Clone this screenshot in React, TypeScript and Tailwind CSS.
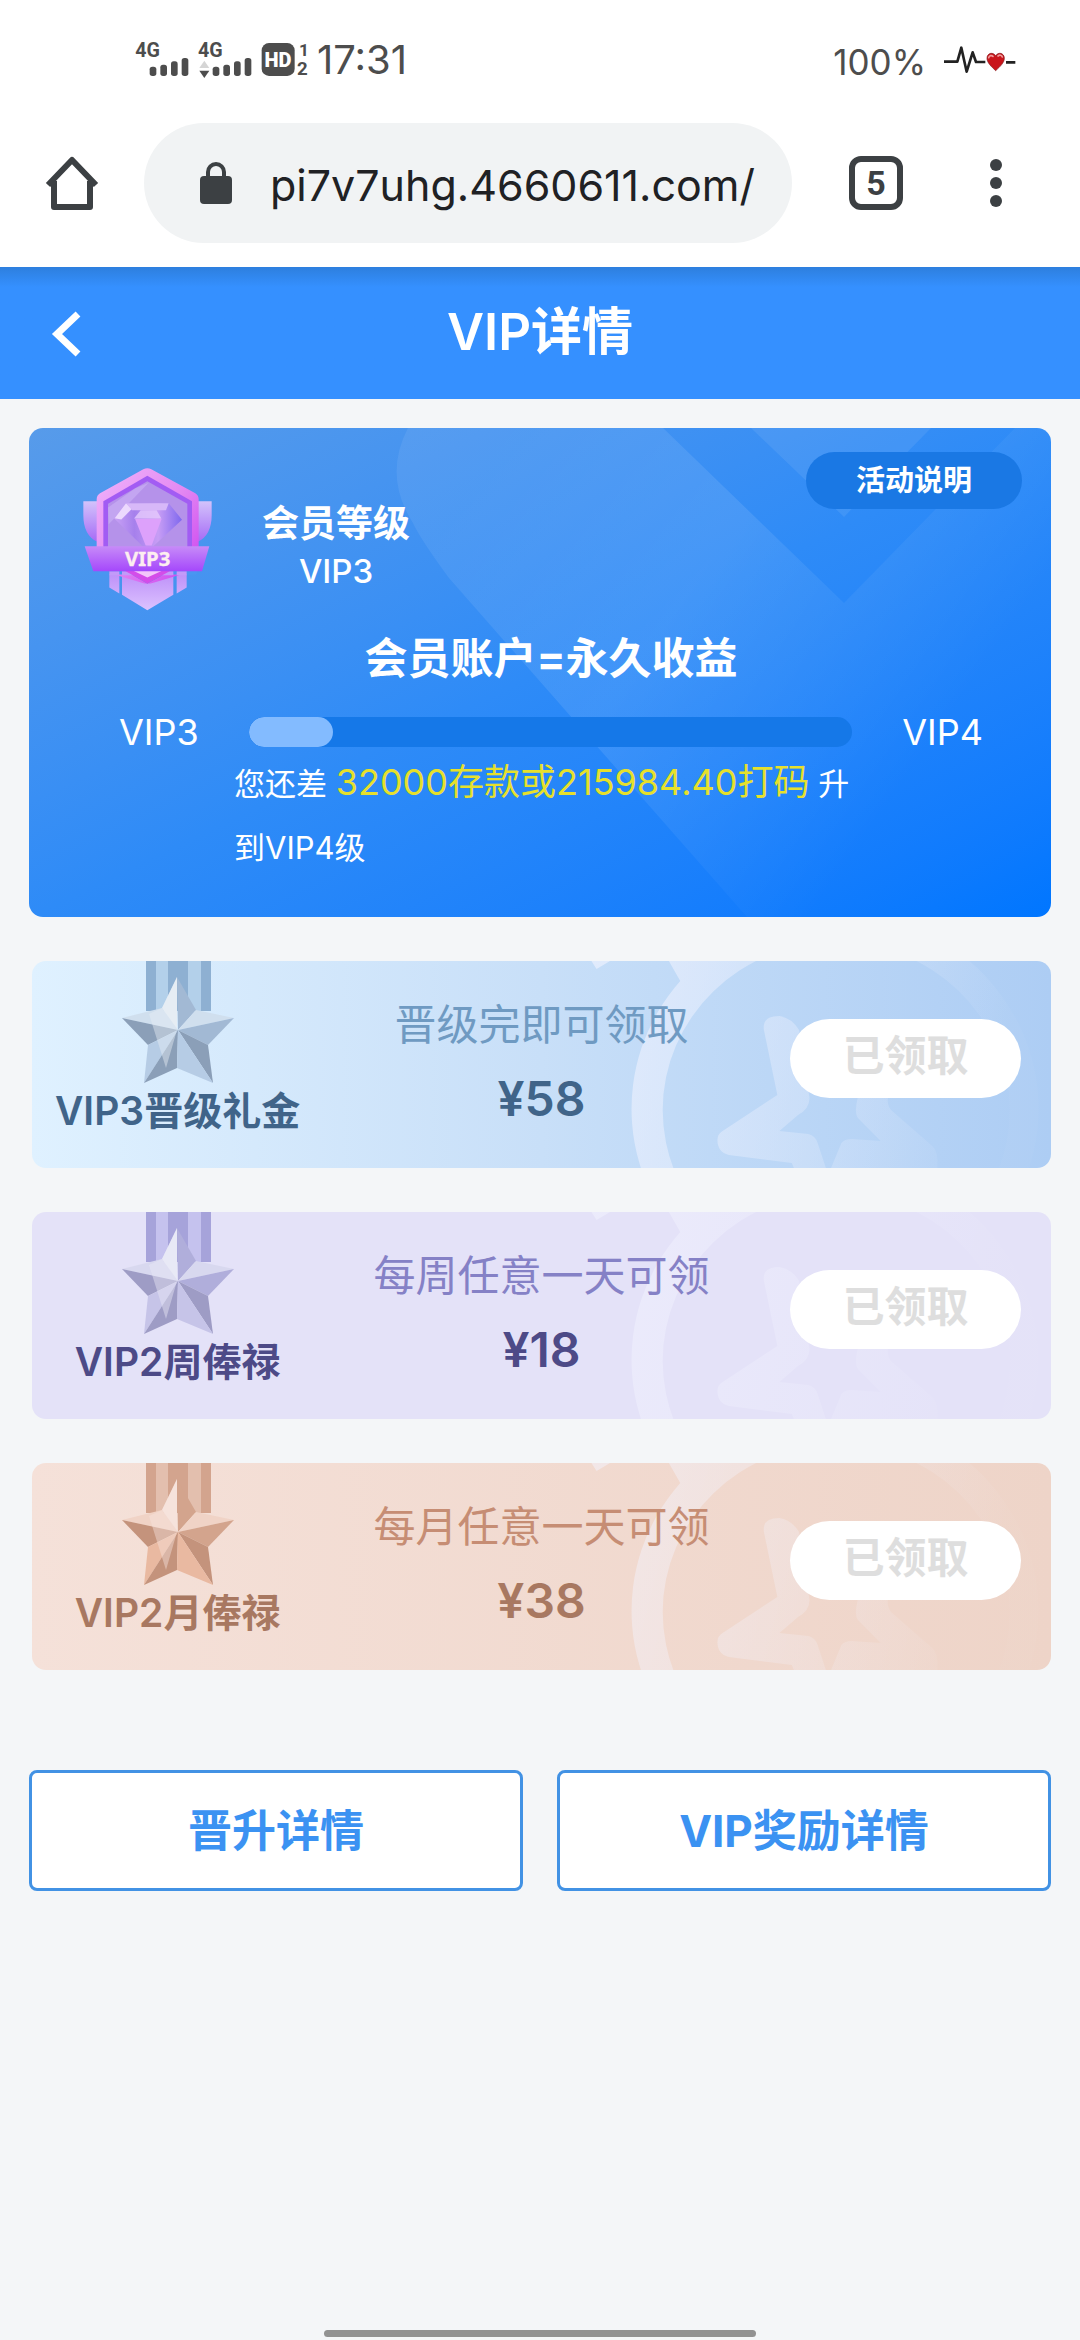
import React from "react";

const FONT = "font-['Inter','Noto_Sans_CJK_SC',sans-serif]";

function Bars() {
  return (
    <g fill="#4d4d4d">
      <rect x="0" y="26" width="20" height="28" rx="8" />
      <rect x="32" y="20" width="20" height="34" rx="8" />
      <rect x="64" y="10" width="20" height="44" rx="8" />
      <rect x="96" y="0" width="20" height="54" rx="8" />
    </g>
  );
}

function StatusBar() {
  return (
    <div className="flex h-[120px] items-start justify-between pt-[36px] pr-[64px] pl-[135px] text-[#4d4d4d]">
      <div className="flex h-[48px] items-center">
        <svg className="h-[40px] w-[174px]" viewBox="106 60 522 120" aria-label="4G 4G HD">
          <g fontFamily="Roboto" fontWeight="700" fill="#4d4d4d">
            <text x="107" y="110" fontSize="59">4G</text>
            <text x="295" y="110" fontSize="59">4G</text>
            <text x="598" y="107" fontSize="52">1</text>
            <text x="592" y="164" fontSize="56">2</text>
          </g>
          <g transform="translate(150 114)"><Bars /></g>
          <g transform="translate(339 114)"><Bars /></g>
          <path d="M314 122l15 22h-30z" fill="#d5d5d5" />
          <path d="M314 174l15-22h-30z" fill="#4d4d4d" />
          <rect x="486" y="69" width="99" height="99" rx="22" fill="#4d4d4d" />
          <text x="535" y="141" fontSize="60" fontFamily="Roboto" fontWeight="900" textAnchor="middle" fill="#fff">HD</text>
        </svg>
        <span className="ml-[8px] text-[40px] leading-[48px]">17:31</span>
      </div>
      <div className="flex h-[48px] items-center">
        <span className="pt-[4px] text-[35px] leading-[48px]">100%</span>
        <svg className="ml-[18px] h-[30px] w-[72px]" viewBox="432 76 216 90">
          <path d="M432 126h40l12-42 16 72 18-58 10 29h28M618 128h28" fill="none" stroke="#222" strokeWidth="8" strokeLinejoin="round" />
          <path d="M587 153c-13-12-26-24-26-37 0-17 20-20 26-7 6-13 26-10 26 7 0 13-13 25-26 37z" fill="#c9151b" stroke="#7d1216" strokeWidth="2" />
          <path d="M566 114c2-7 9-8 13-4M594 109c5-4 11-3 13 3" stroke="#f09a9a" strokeWidth="5" fill="none" strokeLinecap="round" />
        </svg>
      </div>
    </div>
  );
}

function BrowserBar() {
  return (
    <div className="flex items-center px-[45px] pt-[3px] pb-[24px]">
      <button aria-label="主页" className="shrink-0">
        <svg className="size-[54px]" viewBox="0 0 54 54" fill="none" stroke="#3c4043" strokeWidth="6" strokeLinejoin="round">
          <path d="M3 29L27 4l24 25M9 25v26h36V25" />
        </svg>
      </button>
      <div className="ml-[45px] flex h-[120px] flex-1 items-center rounded-full bg-[#f1f3f4] pr-[30px] pl-[56px]">
        <svg className="h-[42px] w-[32px] shrink-0" viewBox="0 0 32 42">
          <path d="M8 16v-6a8 8 0 0 1 16 0v6" fill="none" stroke="#3c4043" strokeWidth="4" />
          <rect y="14" width="32" height="28" rx="4" fill="#3c4043" />
        </svg>
        <input
          aria-label="网址"
          readOnly
          value="pi7v7uhg.4660611.com/"
          className="ml-[38px] w-full min-w-0 bg-transparent pt-[4px] text-[43px] text-[#202124] outline-none"
        />
      </div>
      <button aria-label="标签页" className="ml-[57px] flex size-[54px] shrink-0 items-center justify-center rounded-[12px] border-[6px] border-[#3c4043] font-['Roboto',sans-serif] text-[34px] leading-none font-bold text-[#3c4043]">
        5
      </button>
      <button aria-label="更多" className="mr-[33px] ml-[87px] flex shrink-0 flex-col gap-[6px]">
        <span className="size-[12px] rounded-full bg-[#3c4043]" />
        <span className="size-[12px] rounded-full bg-[#3c4043]" />
        <span className="size-[12px] rounded-full bg-[#3c4043]" />
      </button>
    </div>
  );
}

function PageHeader() {
  return (
    <header className="relative flex h-[132px] items-center justify-center bg-[#3590ff] bg-linear-to-b from-[#2d7fde] to-[#3590ff] to-[20px]">
      <button aria-label="返回" className="absolute top-[44px] left-[50px]">
        <svg className="h-[46px] w-[32px]" viewBox="0 0 32 46" fill="none" stroke="#fff" strokeWidth="7">
          <path d="M28 3L7 23l21 20" />
        </svg>
      </button>
      <h1 className="pb-[2px] text-[51px] leading-[64px] font-semibold text-white">VIP详情</h1>
    </header>
  );
}

function LevelBadge() {
  return (
    <svg className="h-[144px] w-[129px] shrink-0" viewBox="189 141 387 431">
      <defs>
        <linearGradient id="wing" x1="0" y1="0" x2="0" y2="1">
          <stop offset="0" stopColor="#d3c3fb" />
          <stop offset="1" stopColor="#a66af6" />
        </linearGradient>
        <linearGradient id="rim" x1="0" y1="0" x2="1" y2="1">
          <stop offset="0" stopColor="#f0b4fb" />
          <stop offset=".5" stopColor="#e48af2" />
          <stop offset="1" stopColor="#c93df0" />
        </linearGradient>
        <linearGradient id="band" x1="0" y1="0" x2="0" y2="1">
          <stop offset="0" stopColor="#c78bf8" />
          <stop offset="1" stopColor="#a548fb" />
        </linearGradient>
        <linearGradient id="tail" x1="0" y1="0" x2="0" y2="1">
          <stop offset="0" stopColor="#bb8cf8" />
          <stop offset="1" stopColor="#dcc2ff" />
        </linearGradient>
        <linearGradient id="gem" x1="0" y1="0" x2="1" y2="0">
          <stop offset="0" stopColor="#c9a2f5" />
          <stop offset=".3" stopColor="#a680ec" />
          <stop offset=".65" stopColor="#c79df5" />
          <stop offset="1" stopColor="#7f68ee" />
        </linearGradient>
      </defs>
      <path d="M190 243h42v122q-42-20-42-80zM575 243h-42v122q42-20 42-80z" fill="url(#wing)" />
      <path d="M268 450h30v70l-30-18zM500 450h-30v70l30-18zM306 450h154v74l-78 46-76-46z" fill="url(#tail)" />
      <path d="M370 147q12-6 24 0l132 72q10 6 10 18v210l-136 41q-18 6-34 0L230 447V237q0-12 10-18z" fill="url(#rim)" />
      <path d="M382 167l134 76v150H250V243z" fill="#a25cf3" />
      <path d="M382 183l120 68v140H264V251z" fill="#b592ea" />
      <path d="M264 262l82-58 40-16-120 124z" fill="#cdb4f5" opacity=".55" />
      <path d="M230 447l85 5 67 38 70-38 84-5-8 16H236z" fill="#4a95f2" />
      <path d="M268 453h30v12h-30zM306 453h154v12H306zM470 453h30v12h-30z" fill="#c29bf9" />
      <path d="M312 450h142l-72 40z" fill="#d44de9" />
      <path d="M340 452h86l-44 20z" fill="#f3c6fa" />
      <path d="M318 249h128l40 50-86 79h-32l-86-84z" fill="url(#gem)" />
      <path d="M345 296h80l-30 80h-18z" fill="#dda1fb" />
      <path d="M318 249l-34 45 20 4 32-32z" fill="#ecd9fd" />
      <path d="M318 249h128l-8 21h-102z" fill="#d7b8f8" />
      <path d="M362 270l-20 25h82l-14-25z" fill="#e6cbfc" opacity=".8" />
      <path d="M194 378h374l-22 75H220z" fill="url(#band)" />
      <text x="383" y="437" textAnchor="middle" fontFamily="Noto Sans" fontWeight="700" fontSize="61" fill="#fdeef0" stroke="#fdeef0" strokeWidth="1">VIP3</text>
    </svg>
  );
}

function LevelCard() {
  return (
    <section className="relative overflow-hidden rounded-[14px] bg-linear-to-br from-[#579bea] via-[#2e8bf7] to-[#0076ff] text-white">
      <svg className="absolute inset-0 size-full" viewBox="0 0 1022 489" preserveAspectRatio="none" aria-hidden="true">
        <defs>
          <linearGradient id="sheen" gradientUnits="userSpaceOnUse" x1="430" y1="80" x2="860" y2="380">
            <stop offset="0" stopColor="#fff" stopOpacity=".07" />
            <stop offset=".45" stopColor="#fff" stopOpacity=".1" />
            <stop offset="1" stopColor="#fff" stopOpacity="0" />
          </linearGradient>
        </defs>
        <path d="M379 0Q354 48 384 95Q392 112 420 150L718 489H1022V0H986L815 175L634 0Z" fill="url(#sheen)" />
        <path d="M722 0L815 89L902 0Z" fill="#fff" opacity=".08" />
      </svg>
      <div className="relative">
        <div className="flex items-start">
          <div className="flex flex-1 pt-[39px] pl-[54px]">
            <LevelBadge />
            <div className="ml-[50px] pt-[30px] text-center font-semibold">
              <p className="text-[37px] leading-[54px]">会员等级</p>
              <p className="text-[33px] leading-[40px] font-medium">VIP3</p>
            </div>
          </div>
          <button className="mt-[24px] mr-[29px] h-[57px] rounded-full bg-[#1a78e4] px-[50px] text-[29px] leading-[54px] font-bold">活动说明</button>
        </div>
        <h2 className="mt-[17px] pl-[22px] text-center text-[43px] leading-[60px] font-bold">会员账户=永久收益</h2>
        <div className="mt-[26px] flex items-center pr-[68px] pl-[90px] text-[36px] leading-[36px]">
          <span>VIP3</span>
          <div role="progressbar" aria-label="升级进度" aria-valuenow={14} className="mx-[50px] h-[30px] flex-1 overflow-hidden rounded-full bg-[#1578e8]">
            <div className="h-full w-[14%] rounded-full bg-[#83bbff]" />
          </div>
          <span>VIP4</span>
        </div>
        <p className="mr-[200px] ml-[205px] pb-[37px] text-[31px] leading-[64px]">
          您还差 <span className="text-[36px] text-[#e6e02c]">32000存款或215984.40打码</span> 升
          <br />
          到VIP4级
        </p>
      </div>
    </section>
  );
}

type Shades = { ribbon: string; ribbonLight: string; dark: string; mid: string; soft: string; light: string; pale: string };

function Medal({ s }: { s: Shades }) {
  return (
    <svg className="h-[125px] w-[116px]" viewBox="0 0 116 125" aria-hidden="true">
      <path d="M26 0h65v50H26z" fill={s.ribbon} />
      <path d="M36 0h12v50H36zM68 0h13v50H68z" fill={s.ribbonLight} />
      <path d="M57 16v53L42 47z" fill={s.pale} />
      <path d="M57 16l19 33-18 20z" fill={s.mid} />
      <path d="M2 57l40-10 16 22z" fill={s.light} />
      <path d="M2 57l26 27 30-15z" fill={s.dark} />
      <path d="M114 57L76 49 58 69z" fill={s.light} />
      <path d="M114 57L88 84 58 69z" fill={s.mid} />
      <path d="M28 84l-4 38 34-53z" fill={s.soft} />
      <path d="M24 122l33-15 1-38z" fill={s.dark} />
      <path d="M88 84l5 38-35-53z" fill={s.dark} />
      <path d="M93 122l-36-15 1-38z" fill={s.soft} />
      <path d="M57 16v53l-11 38-17-54 13-6z" fill={s.pale} opacity=".45" />
    </svg>
  );
}

function Watermark({ id, strength }: { id: string; strength: number }) {
  return (
    <svg className="absolute top-0 right-0 h-full w-[469px]" viewBox="550 0 469 207" aria-hidden="true">
      <defs>
        <linearGradient id={id} gradientUnits="userSpaceOnUse" x1="590" y1="0" x2="950" y2="90">
          <stop offset="0" stopColor="#f3f4ff" stopOpacity={strength} />
          <stop offset="1" stopColor="#f3f4ff" stopOpacity={strength * 0.05} />
        </linearGradient>
      </defs>
      <g fill={`url(#${id})`} transform="translate(-17 0) scale(1.033 1)">
        <path d="M558 0l5 8 13-8z" />
        <path fillRule="evenodd" d="M633 0L644 20A197 197 0 1 0 924 0ZM627 149a168 168 0 1 1 336 0a168 168 0 1 1-336 0z" />
        <path d="M725 69Q723 55 740 55Q752 57 759 69L769 136Q770 147 758 154L740 170L768 173Q775 175 777 182L785 207H754L752 202L691 194Q680 191 680 179Q680 173 685 170L738 134Z" />
        <path d="M790 207L800 182Q803 178 810 178L838 180L816 157Q812 152 816 136H845Q844 144 848 149L888 185Q894 190 893 207Z" />
      </g>
    </svg>
  );
}

type Reward = { id: string; name: string; note: string; amount: string; card: string; title: string; noteColor: string; strength: number; shades: Shades };

const rewards: Reward[] = [
  {
    id: "promo", name: "VIP3晋级礼金", note: "晋级完即可领取", amount: "¥58",
    card: "bg-linear-to-r from-[#dff1ff] via-[#c8dff8] to-[#adcdf4]",
    title: "text-[#406489]", noteColor: "text-[#6f9ac2]", strength: 0.6,
    shades: { ribbon: "#8eb0d2", ribbonLight: "#b3d0ea", dark: "#8b9fb8", mid: "#a2b9d4", soft: "#b6cce5", light: "#d0dfee", pale: "#e6edf5" },
  },
  {
    id: "week", name: "VIP2周俸禄", note: "每周任意一天可领", amount: "¥18",
    card: "bg-[#e4e2f8]",
    title: "text-[#4d4a87]", noteColor: "text-[#8581c6]", strength: 0.5,
    shades: { ribbon: "#a6a3da", ribbonLight: "#c5c2ee", dark: "#9e9cc5", mid: "#b0aedb", soft: "#c6c4e8", light: "#d8d8ef", pale: "#e8e9f6" },
  },
  {
    id: "month", name: "VIP2月俸禄", note: "每月任意一天可领", amount: "¥38",
    card: "bg-linear-to-r from-[#f5e1d9] to-[#eed4c8]",
    title: "text-[#a87861]", noteColor: "text-[#c68d74]", strength: 0.5,
    shades: { ribbon: "#d3a48e", ribbonLight: "#e3bfae", dark: "#c4937c", mid: "#d3a48d", soft: "#e9b9a1", light: "#f0d3c6", pale: "#f6e3dc" },
  },
];

function RewardCard({ r }: { r: Reward }) {
  return (
    <li className={`relative grid h-[207px] grid-cols-[2fr_3fr_2fr] overflow-hidden rounded-[14px] ${r.card}`}>
      <Watermark id={r.id} strength={r.strength} />
      <div className={`relative flex flex-col items-center ${r.title}`}>
        <Medal s={r.shades} />
        <h3 className="text-[39px] leading-[50px] font-semibold whitespace-nowrap">{r.name}</h3>
      </div>
      <div className="relative pt-[36px] text-center">
        <p className={`text-[42px] leading-[56px] ${r.noteColor}`}>{r.note}</p>
        <p className={`mt-[16px] text-[48px] leading-[60px] font-semibold ${r.title}`}>{r.amount}</p>
      </div>
      <button disabled className="relative mt-[58px] mr-[30px] h-[79px] w-[231px] self-start justify-self-end rounded-full bg-white pb-[5px] text-[42px] leading-[70px] font-bold text-[#dedede]">
        已领取
      </button>
    </li>
  );
}

export default function App() {
  return (
    <div className={`flex min-h-screen flex-col bg-[#f4f6f8] ${FONT}`}>
      <div className="bg-white">
        <StatusBar />
        <BrowserBar />
      </div>
      <PageHeader />
      <main className="px-[29px] pt-[29px]">
        <LevelCard />
        <ul className="mt-[44px] ml-[3px] flex flex-col gap-[44px]">
          {rewards.map((r) => (
            <RewardCard key={r.id} r={r} />
          ))}
        </ul>
        <div className="mt-[100px] grid grid-cols-2 gap-[34px] text-[44px] leading-[60px] font-bold text-[#3b92f2]">
          <button className="h-[121px] rounded-[8px] border-[3px] border-[#4292e4] bg-white">晋升详情</button>
          <button className="h-[121px] rounded-[8px] border-[3px] border-[#4292e4] bg-white">VIP奖励详情</button>
        </div>
      </main>
      <div className="mx-auto mt-auto mb-[3px] h-[7px] w-2/5 rounded-full bg-[#929292]" />
    </div>
  );
}
